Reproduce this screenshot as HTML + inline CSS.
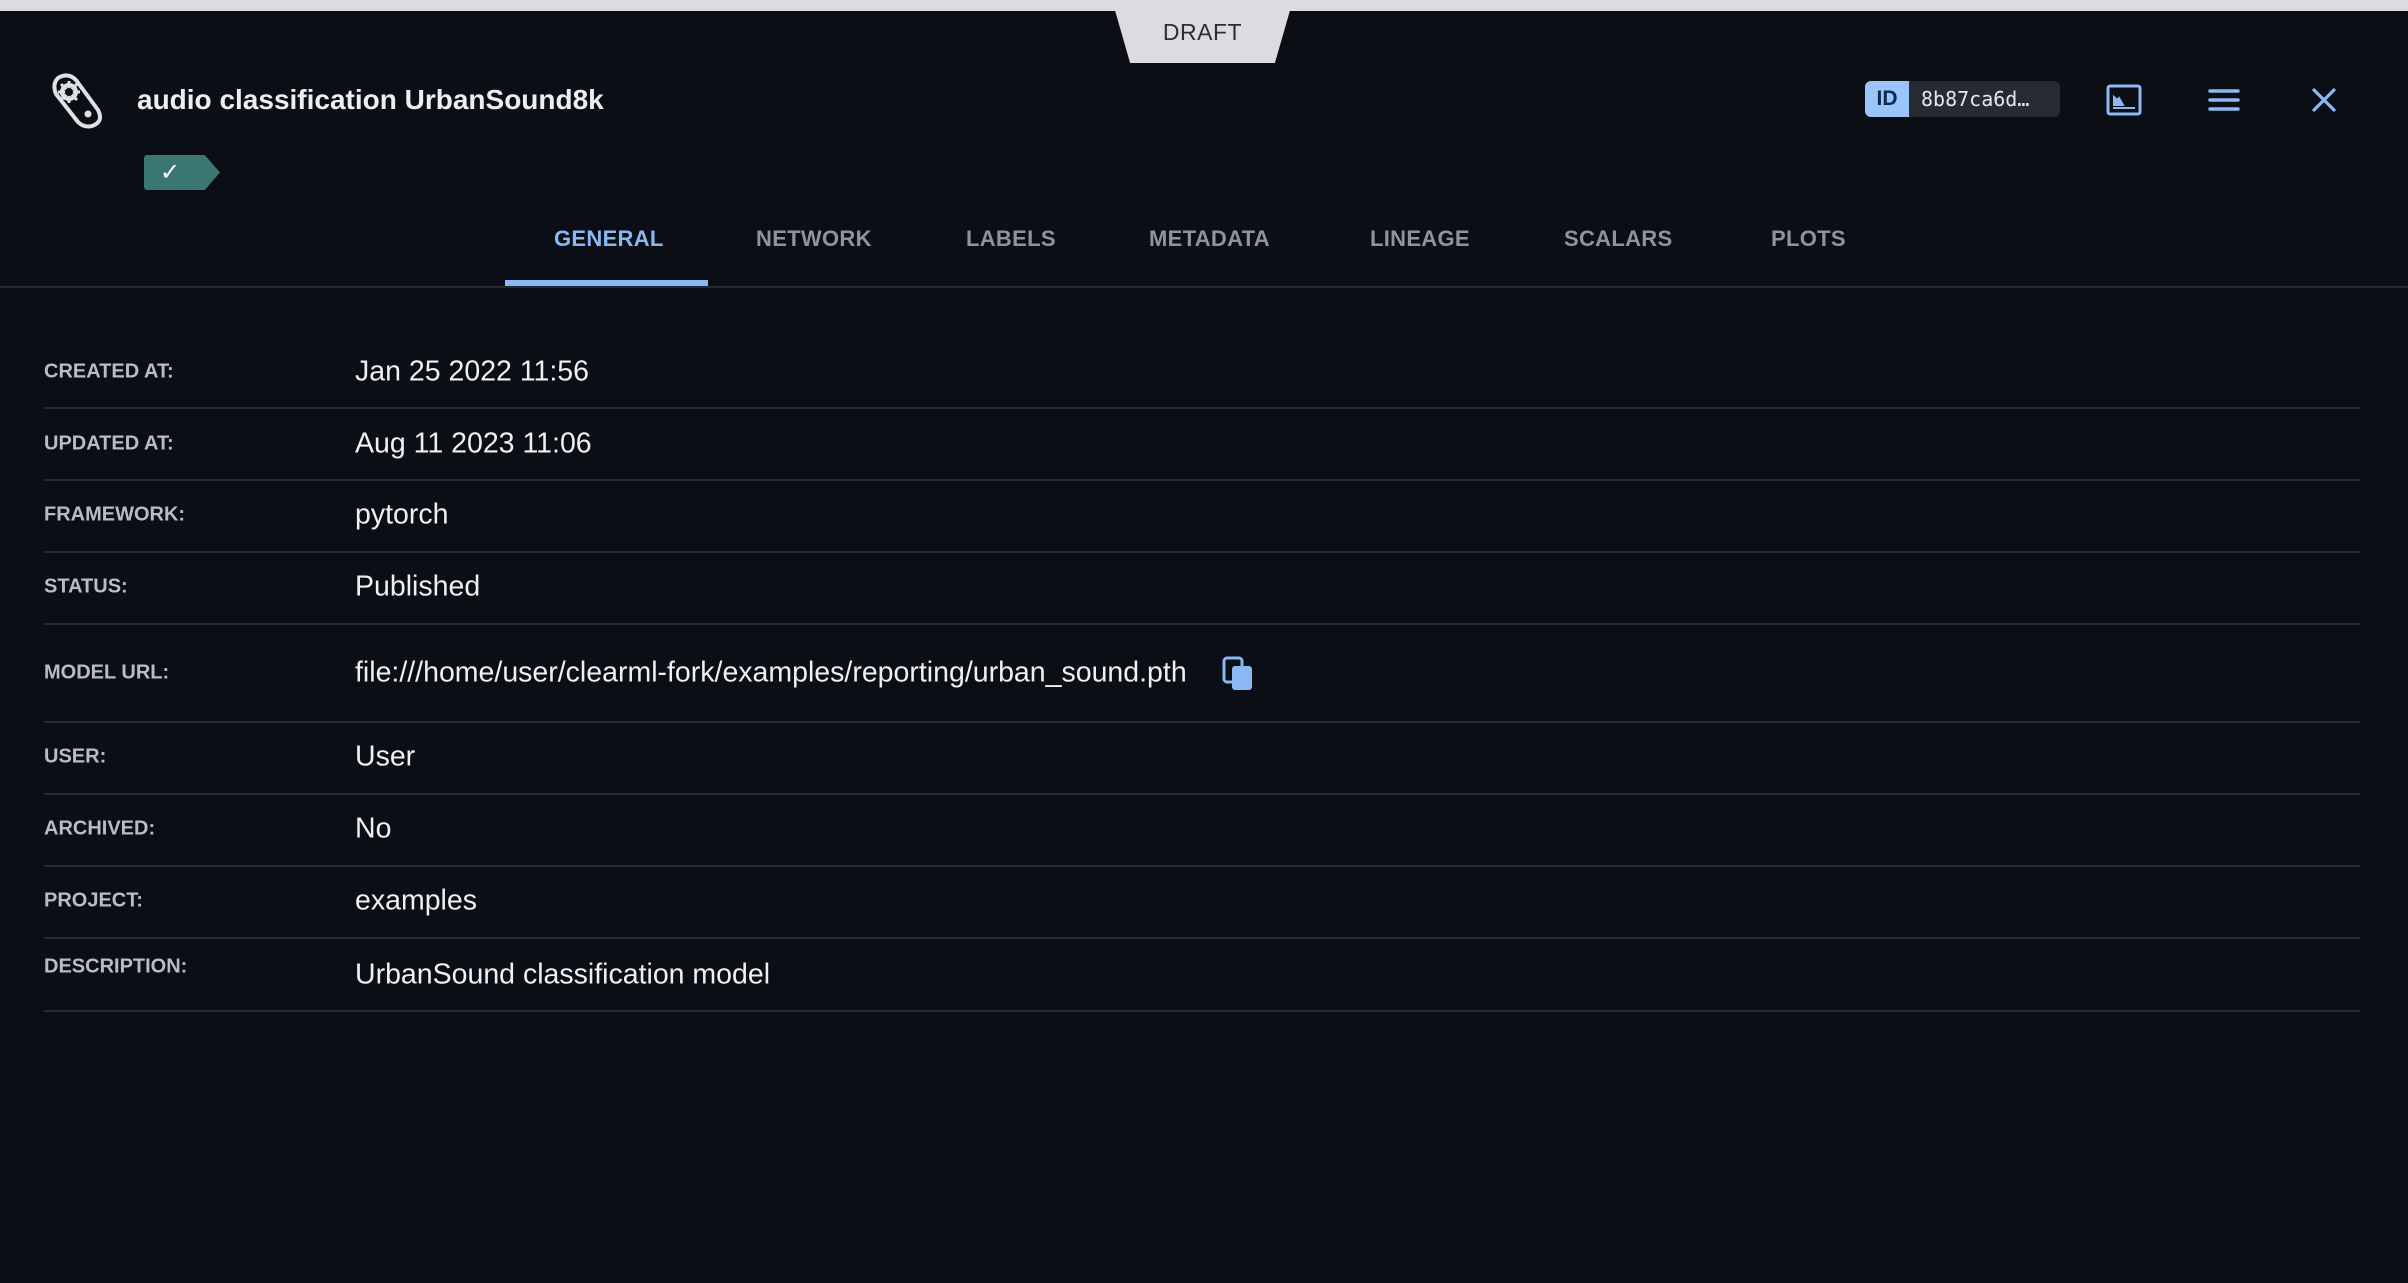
<!DOCTYPE html>
<html><head><meta charset="utf-8"><style>
*{margin:0;padding:0;box-sizing:border-box}
body{width:2408px;height:1283px;background:#0b0e15;font-family:"Liberation Sans",sans-serif;position:relative;overflow:hidden;color:#e6e7ea}
.abs{position:absolute}
.topbar{left:0;top:0;width:2408px;height:11px;background:#dcdce0}
.draft{left:1112px;top:0;width:181px;height:63px;background:#dcdce0;clip-path:polygon(0 0,100% 0,90% 100%,10% 100%);color:#2b2e36;font-size:23px;text-align:center;line-height:64px;letter-spacing:.5px}
.title{left:137px;top:84px;font-size:28px;font-weight:bold;color:#eceef2}
.badge{left:144px;top:155px;width:76px;height:35px;background:#3a7672;clip-path:polygon(0 0,80% 0,100% 50%,80% 100%,0 100%);border-radius:3px;color:#fff;font-size:24px;line-height:35px;padding-left:16px}
.tab{top:226px;font-size:22px;font-weight:bold;color:#8f939c;letter-spacing:.3px}
.uline{left:505px;top:280px;width:203px;height:6px;background:#8ab8f3}
.hdiv{left:0;top:286px;width:2408px;height:2px;background:#23272f}
.lbl{left:44px;font-size:20px;font-weight:bold;color:#b9bcc3;transform:translateY(-50%)}
.val{left:355px;font-size:28.5px;color:#eef0f3;transform:translateY(-50%)}
.rd{left:44px;width:2316px;height:2px;background:#262a32}
</style></head><body>
<div class="abs topbar"></div>
<div class="abs draft">DRAFT</div>
<svg class="abs" style="left:46px;top:70px" width="60" height="60" viewBox="0 0 60 60">
<path d="M12 8 Q22 2 30 10 L52 40 Q58 52 46 56 Q38 58 32 52 L10 24 Q6 14 12 8 Z" fill="none" stroke="#dfe1e6" stroke-width="4"/>
<circle cx="23" cy="22" r="7" fill="none" stroke="#dfe1e6" stroke-width="4"/>
<g stroke="#dfe1e6" stroke-width="3"><line x1="23" y1="11" x2="23" y2="33"/><line x1="12" y1="22" x2="34" y2="22"/><line x1="15" y1="14" x2="31" y2="30"/><line x1="31" y1="14" x2="15" y2="30"/></g>
<circle cx="23" cy="22" r="4" fill="#0b0e15"/>
<circle cx="42" cy="44" r="3.5" fill="#dfe1e6"/>
</svg>
<div class="abs title">audio classification UrbanSound8k</div>
<div class="abs badge">✓</div>
<div class="abs" style="left:1865px;top:81px;width:195px;height:36px;background:#262a32;border-radius:6px;overflow:hidden">
<div style="position:absolute;left:0;top:0;width:44px;height:36px;background:#9ac4fa;color:#0d2a4f;font-weight:bold;font-size:21px;text-align:center;line-height:36px">ID</div>
<div style="position:absolute;left:56px;top:0;line-height:36px;font-family:'DejaVu Sans Mono','Liberation Mono',monospace;font-size:20px;color:#e6e7ea">8b87ca6d…</div>
</div>
<svg class="abs" style="left:2106px;top:84px" width="36" height="32" viewBox="0 0 36 32"><rect x="2" y="2" width="32" height="28" rx="2" fill="none" stroke="#8ab8f3" stroke-width="3"/><path d="M7 24 H29 M8 21 L8 13 L11 16 L13 14 L17 21 Z" stroke="#8ab8f3" stroke-width="2" fill="#8ab8f3"/></svg>
<svg class="abs" style="left:2208px;top:88px" width="32" height="24" viewBox="0 0 32 24"><g stroke="#8ab8f3" stroke-width="3.4" stroke-linecap="round"><line x1="2" y1="3" x2="30" y2="3"/><line x1="2" y1="12" x2="30" y2="12"/><line x1="2" y1="21" x2="30" y2="21"/></g></svg>
<svg class="abs" style="left:2310px;top:86px" width="28" height="28" viewBox="0 0 28 28"><g stroke="#8ab8f3" stroke-width="3.2" stroke-linecap="round"><line x1="4" y1="4" x2="24" y2="24"/><line x1="24" y1="4" x2="4" y2="24"/></g></svg>
<div class="abs tab" style="left:554px;color:#8ab8f3">GENERAL</div>
<div class="abs tab" style="left:756px">NETWORK</div>
<div class="abs tab" style="left:966px">LABELS</div>
<div class="abs tab" style="left:1149px">METADATA</div>
<div class="abs tab" style="left:1370px">LINEAGE</div>
<div class="abs tab" style="left:1564px">SCALARS</div>
<div class="abs tab" style="left:1771px">PLOTS</div>
<div class="abs uline"></div>
<div class="abs hdiv"></div>

<div class="abs lbl" style="top:372px">CREATED AT:</div><div class="abs val" style="top:372px">Jan 25 2022 11:56</div><div class="abs rd" style="top:407px"></div>
<div class="abs lbl" style="top:444px">UPDATED AT:</div><div class="abs val" style="top:444px">Aug 11 2023 11:06</div><div class="abs rd" style="top:479px"></div>
<div class="abs lbl" style="top:515px">FRAMEWORK:</div><div class="abs val" style="top:515px">pytorch</div><div class="abs rd" style="top:551px"></div>
<div class="abs lbl" style="top:587px">STATUS:</div><div class="abs val" style="top:587px">Published</div><div class="abs rd" style="top:623px"></div>
<div class="abs lbl" style="top:673px">MODEL URL:</div><div class="abs val" style="top:673px">file:///home/user/clearml-fork/examples/reporting/urban_sound.pth</div>
<svg class="abs" style="left:1222px;top:656px" width="34" height="36" viewBox="0 0 34 36"><rect x="2" y="2" width="18" height="24" rx="3" fill="none" stroke="#8ab8f3" stroke-width="3"/><rect x="10" y="10" width="20" height="24" rx="3" fill="#8ab8f3"/></svg>
<div class="abs rd" style="top:721px"></div>
<div class="abs lbl" style="top:757px">USER:</div><div class="abs val" style="top:757px">User</div><div class="abs rd" style="top:793px"></div>
<div class="abs lbl" style="top:829px">ARCHIVED:</div><div class="abs val" style="top:829px">No</div><div class="abs rd" style="top:865px"></div>
<div class="abs lbl" style="top:901px">PROJECT:</div><div class="abs val" style="top:901px">examples</div><div class="abs rd" style="top:937px"></div>
<div class="abs lbl" style="top:967px">DESCRIPTION:</div><div class="abs val" style="top:975px">UrbanSound classification model</div><div class="abs rd" style="top:1010px"></div>
</body></html>
